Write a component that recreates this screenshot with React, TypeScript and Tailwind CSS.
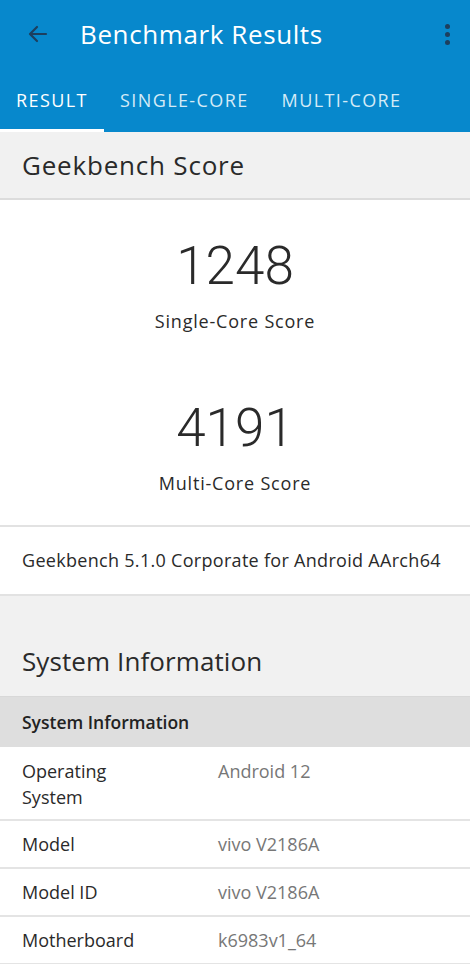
import React from "react";

const rows = [
  { k: "Operating System", v: "Android 12", h: "h-[74px]" },
  { k: "Model", v: "vivo V2186A", h: "h-[48px]" },
  { k: "Model ID", v: "vivo V2186A", h: "h-[48px]" },
  { k: "Motherboard", v: "k6983v1_64", h: "h-[48px]" },
];

export default function App() {
  return (
    <div className="w-[470px] h-[964px] overflow-hidden bg-white text-[#2a2a2a]" style={{ fontFamily: "'Open Sans', 'Noto Sans', sans-serif" }}>
      <div className="bg-[#0788cc]">
        <div className="h-[68px] flex items-center">
          <div className="w-[80px] flex items-center pl-[26px]">
            <svg width="24" height="24" viewBox="0 0 24 24" fill="none" stroke="#1d3f5e" strokeWidth="2.2" strokeLinecap="round" strokeLinejoin="round">
              <path d="M20 12H4.5M11 5l-7 7 7 7" />
            </svg>
          </div>
          <div className="flex-1 text-white text-[26px] tracking-[0.6px] leading-none">Benchmark Results</div>
          <div className="w-[40px] flex flex-col items-center gap-[3px] pr-[6px]">
            <span className="w-[5px] h-[5px] rounded-full bg-[#1d3f5e]" />
            <span className="w-[5px] h-[5px] rounded-full bg-[#1d3f5e]" />
            <span className="w-[5px] h-[5px] rounded-full bg-[#1d3f5e]" />
          </div>
        </div>
        <div className="h-[64px] flex items-center text-[18px] tracking-[1.4px] leading-none">
          <div className="relative w-[104px] h-full flex items-center pl-[16px] text-white">
            RESULT
            <span className="absolute left-0 right-0 bottom-0 h-[3px] bg-white" />
          </div>
          <div className="pl-[16px] text-[#d4ebf7]">SINGLE-CORE</div>
          <div className="pl-[33px] text-[#d4ebf7]">MULTI-CORE</div>
        </div>
      </div>

      <div className="h-[68px] bg-[#f1f1f1] border-b-2 border-[#dcdcdc] flex items-center px-[22px] text-[26px] tracking-[0.8px]">
        Geekbench Score
      </div>

      <div className="h-[327px] border-b-2 border-[#e2e2e2] flex flex-col items-center">
        <div className="mt-[36px] text-[53px] leading-[60px] font-light" style={{ fontFamily: "Roboto, sans-serif" }}>1248</div>
        <div className="mt-[16px] text-[18px] tracking-[0.8px] leading-none">Single-Core Score</div>
        <div className="mt-[68px] text-[53px] leading-[60px] font-light" style={{ fontFamily: "Roboto, sans-serif" }}>4191</div>
        <div className="mt-[16px] text-[18px] tracking-[0.8px] leading-none">Multi-Core Score</div>
      </div>

      <div className="h-[69px] border-b-2 border-[#e2e2e2] flex items-center px-[22px] text-[18px] tracking-[0.3px]">
        Geekbench 5.1.0 Corporate for Android AArch64
      </div>

      <div className="h-[101px] bg-[#f1f1f1] border-b border-[#d8d8d8] flex items-end pb-[15px] px-[22px] text-[26px] tracking-[0.1px]">
        System Information
      </div>
      <div className="h-[50px] bg-[#dedede] flex items-center px-[22px] text-[17.5px] font-semibold text-[#222]">
        System Information
      </div>

      {rows.map((r, i) => (
        <div key={i} className={`${r.h} flex px-[22px] border-b-2 border-[#e4e4e4] ${i === 0 ? "items-start pt-[11px]" : "items-center"}`}>
          <div className="w-[196px] text-[18px] leading-[26px] text-[#2a2a2a]">{r.k === "Operating System" ? <>Operating<br />System</> : r.k}</div>
          <div className="text-[18px] leading-[26px] text-[#777]">{r.v}</div>
        </div>
      ))}
    </div>
  );
}
